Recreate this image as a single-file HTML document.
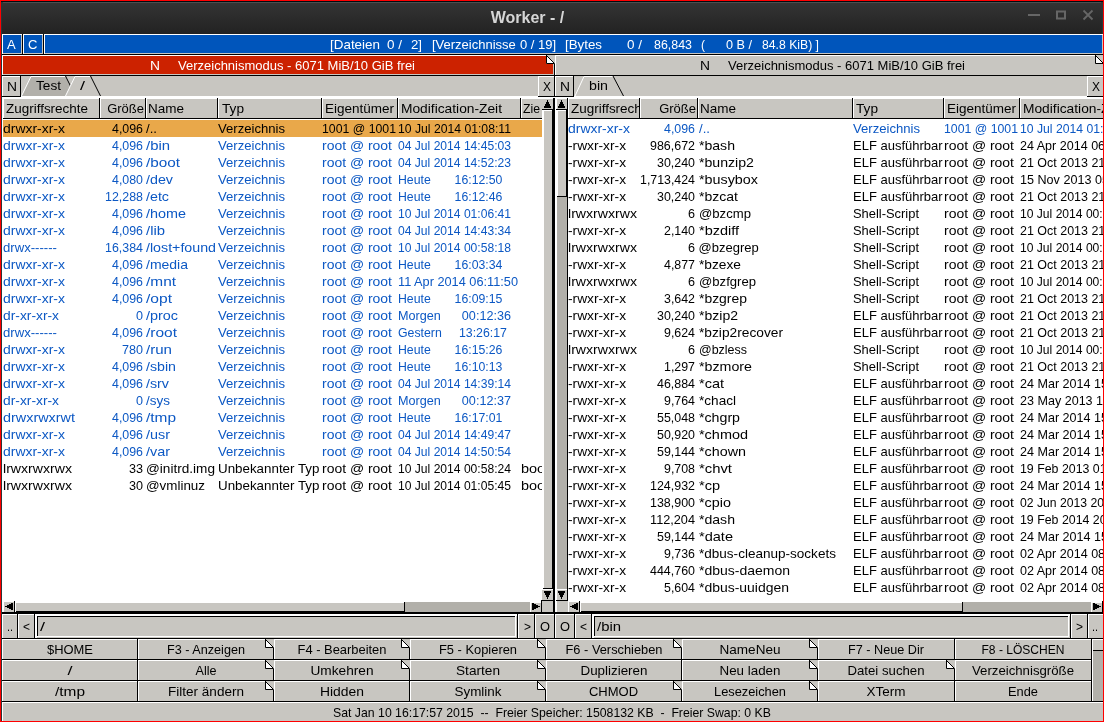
<!DOCTYPE html><html><head><meta charset="utf-8"><style>
html,body{margin:0;padding:0;width:1104px;height:722px;overflow:hidden;background:#000}
.t{position:absolute;white-space:pre;font:13px/16px "Liberation Sans",sans-serif;transform-origin:0 0}
</style></head><body><div style="position:absolute;left:0;top:0;width:1104px;height:722px;overflow:hidden;will-change:transform">
<div style="position:absolute;left:0px;top:0px;width:1104px;height:722px;background:#000;"></div>
<div style="position:absolute;left:1px;top:1px;width:1102px;height:33px;background:linear-gradient(#353535,#222222);"></div>
<div style="position:absolute;left:1px;top:1px;width:1102px;height:1px;background:#020a10;"></div>
<div style="position:absolute;left:3px;top:2px;width:1098px;height:1px;background:#4e4e4e;"></div>
<div style="position:absolute;left:1px;top:2px;width:1px;height:720px;background:#2a3638;"></div>
<div style="position:absolute;left:1102px;top:2px;width:1px;height:32px;background:#2a3638;"></div>
<div class="t" style="top:10px;color:#d6d6d6;font-size:16px;font-weight:bold;left:27.5px;width:1000px;text-align:center;transform-origin:50% 0;">Worker - /</div>
<div style="position:absolute;left:1028px;top:14px;width:12px;height:2px;background:#666;"></div>
<svg style="position:absolute;left:1056px;top:10px" width="11" height="10" viewBox="0 0 11 10"><rect x="1" y="1.5" width="8" height="7" fill="none" stroke="#666" stroke-width="2"/></svg>
<svg style="position:absolute;left:1082px;top:9px" width="12" height="12" viewBox="0 0 12 12"><path d="M1.5 1.5L10.5 10.5M10.5 1.5L1.5 10.5" stroke="#666" stroke-width="1.8"/></svg>
<div style="position:absolute;left:2px;top:34px;width:20px;height:20px;background:#fff;"></div>
<div style="position:absolute;left:3px;top:35px;width:19px;height:19px;background:#0055bb;"></div>
<div style="position:absolute;left:21px;top:35px;width:1px;height:19px;background:#c8c6c1;"></div>
<div style="position:absolute;left:3px;top:53px;width:19px;height:1px;background:#c8c6c1;"></div>
<div style="position:absolute;left:23px;top:34px;width:20px;height:20px;background:#fff;"></div>
<div style="position:absolute;left:24px;top:35px;width:19px;height:19px;background:#0055bb;"></div>
<div style="position:absolute;left:42px;top:35px;width:1px;height:19px;background:#c8c6c1;"></div>
<div style="position:absolute;left:24px;top:53px;width:19px;height:1px;background:#c8c6c1;"></div>
<div style="position:absolute;left:44px;top:34px;width:1059px;height:20px;background:#fff;"></div>
<div style="position:absolute;left:45px;top:35px;width:1058px;height:19px;background:#0055bb;"></div>
<div style="position:absolute;left:1102px;top:35px;width:1px;height:19px;background:#c8c6c1;"></div>
<div style="position:absolute;left:45px;top:53px;width:1058px;height:1px;background:#c8c6c1;"></div>
<div class="t" style="top:37px;color:#fff;left:7px;">A</div>
<div class="t" style="top:37px;color:#fff;left:28px;">C</div>
<div class="t" style="top:37px;color:#fff;transform:scaleX(1.0323);left:330px;">[Dateien</div>
<div class="t" style="top:37px;color:#fff;transform:scaleX(1.0378);left:387px;">0 /</div>
<div class="t" style="top:37px;color:#fff;transform:scaleX(1.0144);left:411px;">2]</div>
<div class="t" style="top:37px;color:#fff;left:432px;">[Verzeichnisse</div>
<div class="t" style="top:37px;color:#fff;left:520px;">0 / 19]</div>
<div class="t" style="top:37px;color:#fff;transform:scaleX(1.0242);left:565px;">[Bytes</div>
<div class="t" style="top:37px;color:#fff;transform:scaleX(1.0378);left:627px;">0 /</div>
<div class="t" style="top:37px;color:#fff;transform:scaleX(0.9552);left:654px;">86,843</div>
<div class="t" style="top:37px;color:#fff;transform:scaleX(0.9242);left:701px;">(</div>
<div class="t" style="top:37px;color:#fff;transform:scaleX(0.9725);left:726px;">0 B /</div>
<div class="t" style="top:37px;color:#fff;transform:scaleX(0.9390);left:762px;">84.8 KiB) ]</div>
<div style="position:absolute;left:2px;top:55px;width:552px;height:20px;background:#fff;"></div>
<div style="position:absolute;left:3px;top:56px;width:551px;height:19px;background:#cc2200;"></div>
<div style="position:absolute;left:553px;top:56px;width:1px;height:19px;background:#c8c6c1;"></div>
<div style="position:absolute;left:3px;top:74px;width:551px;height:1px;background:#c8c6c1;"></div>
<svg style="position:absolute;left:546px;top:55px" width="9" height="9" viewBox="0 0 9 9"><rect x="0" y="0" width="9" height="9" fill="#c8c6c1"/><path d="M0.5 0.5 L0.5 8.5 L8.5 8.5 Z" fill="#fff"/><path d="M0.5 0 L0.5 8.5 L8.5 8.5 M0.5 0.5 L8.5 8.5" stroke="#000" stroke-width="1" fill="none"/></svg>
<div style="position:absolute;left:555px;top:55px;width:548px;height:20px;background:#fff;"></div>
<div style="position:absolute;left:556px;top:56px;width:547px;height:19px;background:#c8c6c1;"></div>
<div style="position:absolute;left:1102px;top:56px;width:1px;height:19px;background:#c8c6c1;"></div>
<div style="position:absolute;left:556px;top:74px;width:547px;height:1px;background:#c8c6c1;"></div>
<svg style="position:absolute;left:1095px;top:55px" width="9" height="9" viewBox="0 0 9 9"><rect x="0" y="0" width="9" height="9" fill="#c8c6c1"/><path d="M0.5 0.5 L0.5 8.5 L8.5 8.5 Z" fill="#fff"/><path d="M0.5 0 L0.5 8.5 L8.5 8.5 M0.5 0.5 L8.5 8.5" stroke="#000" stroke-width="1" fill="none"/></svg>
<div class="t" style="top:58px;color:#fff;transform:scaleX(1.0649);left:150px;">N</div>
<div class="t" style="top:58px;color:#fff;left:178px;">Verzeichnismodus - 6071 MiB/10 GiB frei</div>
<div class="t" style="top:58px;color:#000;transform:scaleX(1.0649);left:700px;">N</div>
<div class="t" style="top:58px;color:#000;left:728px;">Verzeichnismodus - 6071 MiB/10 GiB frei</div>
<div style="position:absolute;left:2px;top:76px;width:552px;height:20px;background:#c8c6c1;"></div>
<div style="position:absolute;left:555px;top:76px;width:548px;height:20px;background:#c8c6c1;"></div>
<div style="position:absolute;left:2px;top:96px;width:1101px;height:3px;background:#fff;"></div>
<div style="position:absolute;left:2px;top:76px;width:18px;height:20px;background:#fff;"></div>
<div style="position:absolute;left:3px;top:77px;width:17px;height:19px;background:#c8c6c1;"></div>
<div style="position:absolute;left:2px;top:96px;width:19px;height:1px;background:#000;"></div>
<div style="position:absolute;left:20px;top:76px;width:1px;height:21px;background:#000;"></div>
<div class="t" style="top:79px;color:#000;transform:scaleX(1.0649);left:6.5px;">N</div>
<div style="position:absolute;left:538px;top:76px;width:16px;height:20px;background:#fff;"></div>
<div style="position:absolute;left:539px;top:77px;width:15px;height:19px;background:#c8c6c1;"></div>
<div style="position:absolute;left:538px;top:96px;width:36px;height:1px;background:#000;"></div>
<div class="t" style="top:79px;color:#000;transform:scaleX(0.9225);left:542.5px;">X</div>
<div style="position:absolute;left:555px;top:76px;width:18px;height:20px;background:#fff;"></div>
<div style="position:absolute;left:556px;top:77px;width:17px;height:19px;background:#c8c6c1;"></div>
<div style="position:absolute;left:573px;top:76px;width:1px;height:21px;background:#000;"></div>
<div class="t" style="top:79px;color:#000;transform:scaleX(1.0649);left:560px;">N</div>
<div style="position:absolute;left:1087px;top:76px;width:16px;height:20px;background:#fff;"></div>
<div style="position:absolute;left:1088px;top:77px;width:15px;height:19px;background:#c8c6c1;"></div>
<div style="position:absolute;left:1087px;top:96px;width:16px;height:1px;background:#000;"></div>
<div class="t" style="top:79px;color:#000;transform:scaleX(0.9225);left:1091.5px;">X</div>
<svg style="position:absolute;left:21px;top:76px" width="100" height="21" viewBox="0 0 100 21"><path d="M21.5 96 L31 76.5 L65.5 76.5 L75.5 96 Z" transform="translate(-21,-76)" fill="#b2b0aa"/><path d="M21.5 96 L31 76.5 L65.5 76.5" transform="translate(-21,-76)" stroke="#fff" fill="none"/><path d="M65.5 76 L75.5 96" transform="translate(-21,-76)" stroke="#000" fill="none"/><path d="M65.5 96 L75 76.5 L90.5 76.5 L100.5 96 Z" transform="translate(-21,-76)" fill="#c8c6c1"/><path d="M65.5 96 L75 76.5 L90.5 76.5" transform="translate(-21,-76)" stroke="#fff" fill="none"/><path d="M90.5 76 L100.5 96" transform="translate(-21,-76)" stroke="#000" fill="none"/></svg>
<div class="t" style="top:78px;color:#000;transform:scaleX(1.0485);left:36px;">Test</div>
<div class="t" style="top:78px;color:#000;transform:scaleX(1.3853);left:80px;">/</div>
<svg style="position:absolute;left:573px;top:76px" width="60" height="21" viewBox="0 0 60 21"><path d="M575 96 L584 76.5 L613 76.5 L623.5 96 Z" transform="translate(-573,-76)" fill="#c8c6c1"/><path d="M575 96 L584 76.5 L613 76.5" transform="translate(-573,-76)" stroke="#fff" fill="none"/><path d="M613 76 L623.5 96" transform="translate(-573,-76)" stroke="#000" fill="none"/></svg>
<div class="t" style="top:78px;color:#000;transform:scaleX(1.0945);left:589px;">bin</div>
<div style="position:absolute;left:2px;top:97px;width:540px;height:1px;background:#fff;"></div>
<div style="position:absolute;left:2px;top:98px;width:2px;height:21px;background:#fff;"></div>
<div style="position:absolute;left:4px;top:99px;width:95px;height:19px;background:#c8c6c1;"></div>
<div style="position:absolute;left:99px;top:98px;width:1px;height:20px;background:#000;"></div>
<div style="position:absolute;left:100px;top:98px;width:1px;height:20px;background:#fff;"></div>
<div style="position:absolute;left:4px;top:98px;width:95px;height:20px;overflow:hidden;">
<div class="t" style="top:3px;color:#000;transform:scaleX(1.0347);left:2px;">Zugriffsrechte</div>
</div>
<div style="position:absolute;left:101px;top:99px;width:44px;height:19px;background:#c8c6c1;"></div>
<div style="position:absolute;left:145px;top:98px;width:1px;height:20px;background:#000;"></div>
<div style="position:absolute;left:146px;top:98px;width:1px;height:20px;background:#fff;"></div>
<div style="position:absolute;left:101px;top:98px;width:44px;height:20px;overflow:hidden;">
<div class="t" style="top:3px;color:#000;left:-957px;width:1000px;text-align:right;transform-origin:100% 0;">Größe</div>
</div>
<div style="position:absolute;left:147px;top:99px;width:70px;height:19px;background:#c8c6c1;"></div>
<div style="position:absolute;left:217px;top:98px;width:1px;height:20px;background:#000;"></div>
<div style="position:absolute;left:218px;top:98px;width:1px;height:20px;background:#fff;"></div>
<div style="position:absolute;left:147px;top:98px;width:70px;height:20px;overflow:hidden;">
<div class="t" style="top:3px;color:#000;transform:scaleX(1.0378);left:1px;">Name</div>
</div>
<div style="position:absolute;left:219px;top:99px;width:102px;height:19px;background:#c8c6c1;"></div>
<div style="position:absolute;left:321px;top:98px;width:1px;height:20px;background:#000;"></div>
<div style="position:absolute;left:322px;top:98px;width:1px;height:20px;background:#fff;"></div>
<div style="position:absolute;left:219px;top:98px;width:102px;height:20px;overflow:hidden;">
<div class="t" style="top:3px;color:#000;transform:scaleX(1.0500);left:2.5px;">Typ</div>
</div>
<div style="position:absolute;left:323px;top:99px;width:74px;height:19px;background:#c8c6c1;"></div>
<div style="position:absolute;left:397px;top:98px;width:1px;height:20px;background:#000;"></div>
<div style="position:absolute;left:398px;top:98px;width:1px;height:20px;background:#fff;"></div>
<div style="position:absolute;left:323px;top:98px;width:74px;height:20px;overflow:hidden;">
<div class="t" style="top:3px;color:#000;transform:scaleX(1.0376);left:1.5px;">Eigentümer</div>
</div>
<div style="position:absolute;left:399px;top:99px;width:121px;height:19px;background:#c8c6c1;"></div>
<div style="position:absolute;left:520px;top:98px;width:1px;height:20px;background:#000;"></div>
<div style="position:absolute;left:521px;top:98px;width:1px;height:20px;background:#fff;"></div>
<div style="position:absolute;left:399px;top:98px;width:121px;height:20px;overflow:hidden;">
<div class="t" style="top:3px;color:#000;transform:scaleX(1.0588);left:1.5px;">Modification-Zeit</div>
</div>
<div style="position:absolute;left:522px;top:99px;width:20px;height:19px;background:#c8c6c1;"></div>
<div style="position:absolute;left:542px;top:98px;width:1px;height:20px;background:#000;"></div>
<div style="position:absolute;left:543px;top:98px;width:1px;height:20px;background:#fff;"></div>
<div style="position:absolute;left:522px;top:98px;width:20px;height:20px;overflow:hidden;">
<div class="t" style="top:3px;color:#000;transform:scaleX(0.9412);left:1px;">Zie</div>
</div>
<div style="position:absolute;left:3px;top:118px;width:539px;height:1px;background:#000;"></div>
<div style="position:absolute;left:2px;top:119px;width:540px;height:482px;overflow:hidden;background:#fff;">
<div style="position:absolute;left:1px;top:1px;width:539px;height:17px;background:#e9a84a;"></div>
<div class="t" style="top:2px;color:#000;transform:scaleX(1.0733);left:1px;">drwxr-xr-x</div>
<div class="t" style="top:2px;color:#000;transform:scaleX(0.9525);left:-859px;width:1000px;text-align:right;transform-origin:100% 0;">4,096</div>
<div class="t" style="top:2px;color:#000;transform:scaleX(1.0159);left:144px;">/..</div>
<div class="t" style="top:2px;color:#000;transform:scaleX(1.0075);left:216px;">Verzeichnis</div>
<div class="t" style="top:2px;color:#000;transform:scaleX(0.9451);left:319.5px;">1001 @ 1001</div>
<div class="t" style="top:2px;color:#000;transform:scaleX(0.9376);left:396px;">10 Jul 2014 01:08:11</div>
<div class="t" style="top:19px;color:#0c58c4;transform:scaleX(1.0733);left:1px;">drwxr-xr-x</div>
<div class="t" style="top:19px;color:#0c58c4;transform:scaleX(0.9525);left:-859px;width:1000px;text-align:right;transform-origin:100% 0;">4,096</div>
<div class="t" style="top:19px;color:#0c58c4;transform:scaleX(1.1446);left:144px;">/bin</div>
<div class="t" style="top:19px;color:#0c58c4;transform:scaleX(1.0075);left:216px;">Verzeichnis</div>
<div class="t" style="top:19px;color:#0c58c4;transform:scaleX(1.0731);left:319.5px;">root @ root</div>
<div class="t" style="top:19px;color:#0c58c4;transform:scaleX(0.9302);left:396px;">04 Jul 2014 14:45:03</div>
<div class="t" style="top:36px;color:#0c58c4;transform:scaleX(1.0733);left:1px;">drwxr-xr-x</div>
<div class="t" style="top:36px;color:#0c58c4;transform:scaleX(0.9525);left:-859px;width:1000px;text-align:right;transform-origin:100% 0;">4,096</div>
<div class="t" style="top:36px;color:#0c58c4;transform:scaleX(1.1756);left:144px;">/boot</div>
<div class="t" style="top:36px;color:#0c58c4;transform:scaleX(1.0075);left:216px;">Verzeichnis</div>
<div class="t" style="top:36px;color:#0c58c4;transform:scaleX(1.0731);left:319.5px;">root @ root</div>
<div class="t" style="top:36px;color:#0c58c4;transform:scaleX(0.9302);left:396px;">04 Jul 2014 14:52:23</div>
<div class="t" style="top:53px;color:#0c58c4;transform:scaleX(1.0733);left:1px;">drwxr-xr-x</div>
<div class="t" style="top:53px;color:#0c58c4;transform:scaleX(0.9525);left:-859px;width:1000px;text-align:right;transform-origin:100% 0;">4,080</div>
<div class="t" style="top:53px;color:#0c58c4;transform:scaleX(1.0985);left:144px;">/dev</div>
<div class="t" style="top:53px;color:#0c58c4;transform:scaleX(1.0075);left:216px;">Verzeichnis</div>
<div class="t" style="top:53px;color:#0c58c4;transform:scaleX(1.0731);left:319.5px;">root @ root</div>
<div class="t" style="top:53px;color:#0c58c4;transform:scaleX(0.9441);left:396px;">Heute       16:12:50</div>
<div class="t" style="top:70px;color:#0c58c4;transform:scaleX(1.0733);left:1px;">drwxr-xr-x</div>
<div class="t" style="top:70px;color:#0c58c4;transform:scaleX(0.9552);left:-859px;width:1000px;text-align:right;transform-origin:100% 0;">12,288</div>
<div class="t" style="top:70px;color:#0c58c4;transform:scaleX(1.0977);left:144px;">/etc</div>
<div class="t" style="top:70px;color:#0c58c4;transform:scaleX(1.0075);left:216px;">Verzeichnis</div>
<div class="t" style="top:70px;color:#0c58c4;transform:scaleX(1.0731);left:319.5px;">root @ root</div>
<div class="t" style="top:70px;color:#0c58c4;transform:scaleX(0.9441);left:396px;">Heute       16:12:46</div>
<div class="t" style="top:87px;color:#0c58c4;transform:scaleX(1.0733);left:1px;">drwxr-xr-x</div>
<div class="t" style="top:87px;color:#0c58c4;transform:scaleX(0.9525);left:-859px;width:1000px;text-align:right;transform-origin:100% 0;">4,096</div>
<div class="t" style="top:87px;color:#0c58c4;transform:scaleX(1.1068);left:144px;">/home</div>
<div class="t" style="top:87px;color:#0c58c4;transform:scaleX(1.0075);left:216px;">Verzeichnis</div>
<div class="t" style="top:87px;color:#0c58c4;transform:scaleX(1.0731);left:319.5px;">root @ root</div>
<div class="t" style="top:87px;color:#0c58c4;transform:scaleX(0.9302);left:396px;">10 Jul 2014 01:06:41</div>
<div class="t" style="top:104px;color:#0c58c4;transform:scaleX(1.0733);left:1px;">drwxr-xr-x</div>
<div class="t" style="top:104px;color:#0c58c4;transform:scaleX(0.9525);left:-859px;width:1000px;text-align:right;transform-origin:100% 0;">4,096</div>
<div class="t" style="top:104px;color:#0c58c4;transform:scaleX(1.1429);left:144px;">/lib</div>
<div class="t" style="top:104px;color:#0c58c4;transform:scaleX(1.0075);left:216px;">Verzeichnis</div>
<div class="t" style="top:104px;color:#0c58c4;transform:scaleX(1.0731);left:319.5px;">root @ root</div>
<div class="t" style="top:104px;color:#0c58c4;transform:scaleX(0.9302);left:396px;">04 Jul 2014 14:43:34</div>
<div class="t" style="top:121px;color:#0c58c4;transform:scaleX(1.0108);left:1px;">drwx------</div>
<div class="t" style="top:121px;color:#0c58c4;transform:scaleX(0.9552);left:-859px;width:1000px;text-align:right;transform-origin:100% 0;">16,384</div>
<div class="t" style="top:121px;color:#0c58c4;transform:scaleX(1.0940);left:144px;">/lost+found</div>
<div class="t" style="top:121px;color:#0c58c4;transform:scaleX(1.0075);left:216px;">Verzeichnis</div>
<div class="t" style="top:121px;color:#0c58c4;transform:scaleX(1.0731);left:319.5px;">root @ root</div>
<div class="t" style="top:121px;color:#0c58c4;transform:scaleX(0.9302);left:396px;">10 Jul 2014 00:58:18</div>
<div class="t" style="top:138px;color:#0c58c4;transform:scaleX(1.0733);left:1px;">drwxr-xr-x</div>
<div class="t" style="top:138px;color:#0c58c4;transform:scaleX(0.9525);left:-859px;width:1000px;text-align:right;transform-origin:100% 0;">4,096</div>
<div class="t" style="top:138px;color:#0c58c4;transform:scaleX(1.0761);left:144px;">/media</div>
<div class="t" style="top:138px;color:#0c58c4;transform:scaleX(1.0075);left:216px;">Verzeichnis</div>
<div class="t" style="top:138px;color:#0c58c4;transform:scaleX(1.0731);left:319.5px;">root @ root</div>
<div class="t" style="top:138px;color:#0c58c4;transform:scaleX(0.9441);left:396px;">Heute       16:03:34</div>
<div class="t" style="top:155px;color:#0c58c4;transform:scaleX(1.0733);left:1px;">drwxr-xr-x</div>
<div class="t" style="top:155px;color:#0c58c4;transform:scaleX(0.9525);left:-859px;width:1000px;text-align:right;transform-origin:100% 0;">4,096</div>
<div class="t" style="top:155px;color:#0c58c4;transform:scaleX(1.1867);left:144px;">/mnt</div>
<div class="t" style="top:155px;color:#0c58c4;transform:scaleX(1.0075);left:216px;">Verzeichnis</div>
<div class="t" style="top:155px;color:#0c58c4;transform:scaleX(1.0731);left:319.5px;">root @ root</div>
<div class="t" style="top:155px;color:#0c58c4;transform:scaleX(0.9801);left:396px;">11 Apr 2014 06:11:50</div>
<div class="t" style="top:172px;color:#0c58c4;transform:scaleX(1.0733);left:1px;">drwxr-xr-x</div>
<div class="t" style="top:172px;color:#0c58c4;transform:scaleX(0.9525);left:-859px;width:1000px;text-align:right;transform-origin:100% 0;">4,096</div>
<div class="t" style="top:172px;color:#0c58c4;transform:scaleX(1.1988);left:144px;">/opt</div>
<div class="t" style="top:172px;color:#0c58c4;transform:scaleX(1.0075);left:216px;">Verzeichnis</div>
<div class="t" style="top:172px;color:#0c58c4;transform:scaleX(1.0731);left:319.5px;">root @ root</div>
<div class="t" style="top:172px;color:#0c58c4;transform:scaleX(0.9441);left:396px;">Heute       16:09:15</div>
<div class="t" style="top:189px;color:#0c58c4;transform:scaleX(1.0626);left:1px;">dr-xr-xr-x</div>
<div class="t" style="top:189px;color:#0c58c4;transform:scaleX(0.9676);left:-859px;width:1000px;text-align:right;transform-origin:100% 0;">0</div>
<div class="t" style="top:189px;color:#0c58c4;transform:scaleX(1.1070);left:144px;">/proc</div>
<div class="t" style="top:189px;color:#0c58c4;transform:scaleX(1.0075);left:216px;">Verzeichnis</div>
<div class="t" style="top:189px;color:#0c58c4;transform:scaleX(1.0731);left:319.5px;">root @ root</div>
<div class="t" style="top:189px;color:#0c58c4;transform:scaleX(0.9710);left:396px;">Morgen      00:12:36</div>
<div class="t" style="top:206px;color:#0c58c4;transform:scaleX(1.0108);left:1px;">drwx------</div>
<div class="t" style="top:206px;color:#0c58c4;transform:scaleX(0.9525);left:-859px;width:1000px;text-align:right;transform-origin:100% 0;">4,096</div>
<div class="t" style="top:206px;color:#0c58c4;transform:scaleX(1.1916);left:144px;">/root</div>
<div class="t" style="top:206px;color:#0c58c4;transform:scaleX(1.0075);left:216px;">Verzeichnis</div>
<div class="t" style="top:206px;color:#0c58c4;transform:scaleX(1.0731);left:319.5px;">root @ root</div>
<div class="t" style="top:206px;color:#0c58c4;transform:scaleX(0.9476);left:396px;">Gestern     13:26:17</div>
<div class="t" style="top:223px;color:#0c58c4;transform:scaleX(1.0733);left:1px;">drwxr-xr-x</div>
<div class="t" style="top:223px;color:#0c58c4;transform:scaleX(0.9676);left:-859px;width:1000px;text-align:right;transform-origin:100% 0;">780</div>
<div class="t" style="top:223px;color:#0c58c4;transform:scaleX(1.1604);left:144px;">/run</div>
<div class="t" style="top:223px;color:#0c58c4;transform:scaleX(1.0075);left:216px;">Verzeichnis</div>
<div class="t" style="top:223px;color:#0c58c4;transform:scaleX(1.0731);left:319.5px;">root @ root</div>
<div class="t" style="top:223px;color:#0c58c4;transform:scaleX(0.9441);left:396px;">Heute       16:15:26</div>
<div class="t" style="top:240px;color:#0c58c4;transform:scaleX(1.0733);left:1px;">drwxr-xr-x</div>
<div class="t" style="top:240px;color:#0c58c4;transform:scaleX(0.9525);left:-859px;width:1000px;text-align:right;transform-origin:100% 0;">4,096</div>
<div class="t" style="top:240px;color:#0c58c4;transform:scaleX(1.0922);left:144px;">/sbin</div>
<div class="t" style="top:240px;color:#0c58c4;transform:scaleX(1.0075);left:216px;">Verzeichnis</div>
<div class="t" style="top:240px;color:#0c58c4;transform:scaleX(1.0731);left:319.5px;">root @ root</div>
<div class="t" style="top:240px;color:#0c58c4;transform:scaleX(0.9441);left:396px;">Heute       16:10:13</div>
<div class="t" style="top:257px;color:#0c58c4;transform:scaleX(1.0733);left:1px;">drwxr-xr-x</div>
<div class="t" style="top:257px;color:#0c58c4;transform:scaleX(0.9525);left:-859px;width:1000px;text-align:right;transform-origin:100% 0;">4,096</div>
<div class="t" style="top:257px;color:#0c58c4;transform:scaleX(1.0985);left:144px;">/srv</div>
<div class="t" style="top:257px;color:#0c58c4;transform:scaleX(1.0075);left:216px;">Verzeichnis</div>
<div class="t" style="top:257px;color:#0c58c4;transform:scaleX(1.0731);left:319.5px;">root @ root</div>
<div class="t" style="top:257px;color:#0c58c4;transform:scaleX(0.9302);left:396px;">04 Jul 2014 14:39:14</div>
<div class="t" style="top:274px;color:#0c58c4;transform:scaleX(1.0626);left:1px;">dr-xr-xr-x</div>
<div class="t" style="top:274px;color:#0c58c4;transform:scaleX(0.9676);left:-859px;width:1000px;text-align:right;transform-origin:100% 0;">0</div>
<div class="t" style="top:274px;color:#0c58c4;transform:scaleX(1.0385);left:144px;">/sys</div>
<div class="t" style="top:274px;color:#0c58c4;transform:scaleX(1.0075);left:216px;">Verzeichnis</div>
<div class="t" style="top:274px;color:#0c58c4;transform:scaleX(1.0731);left:319.5px;">root @ root</div>
<div class="t" style="top:274px;color:#0c58c4;transform:scaleX(0.9710);left:396px;">Morgen      00:12:37</div>
<div class="t" style="top:291px;color:#0c58c4;transform:scaleX(1.1077);left:1px;">drwxrwxrwt</div>
<div class="t" style="top:291px;color:#0c58c4;transform:scaleX(0.9525);left:-859px;width:1000px;text-align:right;transform-origin:100% 0;">4,096</div>
<div class="t" style="top:291px;color:#0c58c4;transform:scaleX(1.1867);left:144px;">/tmp</div>
<div class="t" style="top:291px;color:#0c58c4;transform:scaleX(1.0075);left:216px;">Verzeichnis</div>
<div class="t" style="top:291px;color:#0c58c4;transform:scaleX(1.0731);left:319.5px;">root @ root</div>
<div class="t" style="top:291px;color:#0c58c4;transform:scaleX(0.9441);left:396px;">Heute       16:17:01</div>
<div class="t" style="top:308px;color:#0c58c4;transform:scaleX(1.0733);left:1px;">drwxr-xr-x</div>
<div class="t" style="top:308px;color:#0c58c4;transform:scaleX(0.9525);left:-859px;width:1000px;text-align:right;transform-origin:100% 0;">4,096</div>
<div class="t" style="top:308px;color:#0c58c4;transform:scaleX(1.1074);left:144px;">/usr</div>
<div class="t" style="top:308px;color:#0c58c4;transform:scaleX(1.0075);left:216px;">Verzeichnis</div>
<div class="t" style="top:308px;color:#0c58c4;transform:scaleX(1.0731);left:319.5px;">root @ root</div>
<div class="t" style="top:308px;color:#0c58c4;transform:scaleX(0.9302);left:396px;">04 Jul 2014 14:49:47</div>
<div class="t" style="top:325px;color:#0c58c4;transform:scaleX(1.0733);left:1px;">drwxr-xr-x</div>
<div class="t" style="top:325px;color:#0c58c4;transform:scaleX(0.9525);left:-859px;width:1000px;text-align:right;transform-origin:100% 0;">4,096</div>
<div class="t" style="top:325px;color:#0c58c4;transform:scaleX(1.1074);left:144px;">/var</div>
<div class="t" style="top:325px;color:#0c58c4;transform:scaleX(1.0075);left:216px;">Verzeichnis</div>
<div class="t" style="top:325px;color:#0c58c4;transform:scaleX(1.0731);left:319.5px;">root @ root</div>
<div class="t" style="top:325px;color:#0c58c4;transform:scaleX(0.9302);left:396px;">04 Jul 2014 14:50:54</div>
<div class="t" style="top:342px;color:#000;transform:scaleX(1.0858);left:1px;">lrwxrwxrwx</div>
<div class="t" style="top:342px;color:#000;transform:scaleX(0.9676);left:-859px;width:1000px;text-align:right;transform-origin:100% 0;">33</div>
<div class="t" style="top:342px;color:#000;transform:scaleX(1.0462);left:144px;">@initrd.img</div>
<div class="t" style="top:342px;color:#000;transform:scaleX(1.0274);left:216px;">Unbekannter Typ</div>
<div class="t" style="top:342px;color:#000;transform:scaleX(1.0731);left:319.5px;">root @ root</div>
<div class="t" style="top:342px;color:#000;transform:scaleX(0.9302);left:396px;">10 Jul 2014 00:58:24</div>
<div class="t" style="top:342px;color:#000;transform:scaleX(1.1142);left:519px;">boot/initrd.img</div>
<div class="t" style="top:359px;color:#000;transform:scaleX(1.0858);left:1px;">lrwxrwxrwx</div>
<div class="t" style="top:359px;color:#000;transform:scaleX(0.9676);left:-859px;width:1000px;text-align:right;transform-origin:100% 0;">30</div>
<div class="t" style="top:359px;color:#000;transform:scaleX(1.0300);left:144px;">@vmlinuz</div>
<div class="t" style="top:359px;color:#000;transform:scaleX(1.0274);left:216px;">Unbekannter Typ</div>
<div class="t" style="top:359px;color:#000;transform:scaleX(1.0731);left:319.5px;">root @ root</div>
<div class="t" style="top:359px;color:#000;transform:scaleX(0.9302);left:396px;">10 Jul 2014 01:05:45</div>
<div class="t" style="top:359px;color:#000;transform:scaleX(1.1096);left:519px;">boot/vmlinuz</div>
</div>
<div style="position:absolute;left:568px;top:97px;width:535px;height:1px;background:#fff;"></div>
<div style="position:absolute;left:568px;top:98px;width:1px;height:21px;background:#fff;"></div>
<div style="position:absolute;left:569px;top:99px;width:70px;height:19px;background:#c8c6c1;"></div>
<div style="position:absolute;left:639px;top:98px;width:1px;height:20px;background:#000;"></div>
<div style="position:absolute;left:640px;top:98px;width:1px;height:20px;background:#fff;"></div>
<div style="position:absolute;left:569px;top:98px;width:70px;height:20px;overflow:hidden;">
<div class="t" style="top:3px;color:#000;transform:scaleX(1.0347);left:1.5px;">Zugriffsrechte</div>
</div>
<div style="position:absolute;left:641px;top:99px;width:56px;height:19px;background:#c8c6c1;"></div>
<div style="position:absolute;left:697px;top:98px;width:1px;height:20px;background:#000;"></div>
<div style="position:absolute;left:698px;top:98px;width:1px;height:20px;background:#fff;"></div>
<div style="position:absolute;left:641px;top:98px;width:56px;height:20px;overflow:hidden;">
<div class="t" style="top:3px;color:#000;left:-945px;width:1000px;text-align:right;transform-origin:100% 0;">Größe</div>
</div>
<div style="position:absolute;left:699px;top:99px;width:153px;height:19px;background:#c8c6c1;"></div>
<div style="position:absolute;left:852px;top:98px;width:1px;height:20px;background:#000;"></div>
<div style="position:absolute;left:853px;top:98px;width:1px;height:20px;background:#fff;"></div>
<div style="position:absolute;left:699px;top:98px;width:153px;height:20px;overflow:hidden;">
<div class="t" style="top:3px;color:#000;transform:scaleX(1.0378);left:1px;">Name</div>
</div>
<div style="position:absolute;left:854px;top:99px;width:89px;height:19px;background:#c8c6c1;"></div>
<div style="position:absolute;left:943px;top:98px;width:1px;height:20px;background:#000;"></div>
<div style="position:absolute;left:944px;top:98px;width:1px;height:20px;background:#fff;"></div>
<div style="position:absolute;left:854px;top:98px;width:89px;height:20px;overflow:hidden;">
<div class="t" style="top:3px;color:#000;transform:scaleX(1.0500);left:2px;">Typ</div>
</div>
<div style="position:absolute;left:945px;top:99px;width:74px;height:19px;background:#c8c6c1;"></div>
<div style="position:absolute;left:1019px;top:98px;width:1px;height:20px;background:#000;"></div>
<div style="position:absolute;left:1020px;top:98px;width:1px;height:20px;background:#fff;"></div>
<div style="position:absolute;left:945px;top:98px;width:74px;height:20px;overflow:hidden;">
<div class="t" style="top:3px;color:#000;transform:scaleX(1.0376);left:2px;">Eigentümer</div>
</div>
<div style="position:absolute;left:1021px;top:99px;width:82px;height:19px;background:#c8c6c1;"></div>
<div style="position:absolute;left:1103px;top:98px;width:1px;height:20px;background:#000;"></div>
<div style="position:absolute;left:1104px;top:98px;width:1px;height:20px;background:#fff;"></div>
<div style="position:absolute;left:1021px;top:98px;width:82px;height:20px;overflow:hidden;">
<div class="t" style="top:3px;color:#000;transform:scaleX(1.0588);left:1.5px;">Modification-Zeit</div>
</div>
<div style="position:absolute;left:568px;top:118px;width:535px;height:1px;background:#000;"></div>
<div style="position:absolute;left:568px;top:119px;width:535px;height:482px;overflow:hidden;background:#fff;">
<div class="t" style="top:2px;color:#0c58c4;transform:scaleX(1.0733);left:0px;">drwxr-xr-x</div>
<div class="t" style="top:2px;color:#0c58c4;transform:scaleX(0.9525);left:-873px;width:1000px;text-align:right;transform-origin:100% 0;">4,096</div>
<div class="t" style="top:2px;color:#0c58c4;transform:scaleX(1.0159);left:130.5px;">/..</div>
<div class="t" style="top:2px;color:#0c58c4;transform:scaleX(1.0075);left:285px;">Verzeichnis</div>
<div class="t" style="top:2px;color:#0c58c4;transform:scaleX(0.9451);left:376px;">1001 @ 1001</div>
<div class="t" style="top:2px;color:#0c58c4;transform:scaleX(0.9376);left:452px;">10 Jul 2014 01:08:11</div>
<div class="t" style="top:19px;color:#000;transform:scaleX(1.0572);left:0px;">-rwxr-xr-x</div>
<div class="t" style="top:19px;color:#000;transform:scaleX(0.9571);left:-873px;width:1000px;text-align:right;transform-origin:100% 0;">986,672</div>
<div class="t" style="top:19px;color:#000;transform:scaleX(1.0822);left:130.5px;">*bash</div>
<div class="t" style="top:19px;color:#000;left:285px;">ELF ausführbar</div>
<div class="t" style="top:19px;color:#000;transform:scaleX(1.0731);left:376px;">root @ root</div>
<div class="t" style="top:19px;color:#000;transform:scaleX(0.9648);left:452px;">24 Apr 2014 06:35:12</div>
<div class="t" style="top:36px;color:#000;transform:scaleX(1.0572);left:0px;">-rwxr-xr-x</div>
<div class="t" style="top:36px;color:#000;transform:scaleX(0.9552);left:-873px;width:1000px;text-align:right;transform-origin:100% 0;">30,240</div>
<div class="t" style="top:36px;color:#000;transform:scaleX(1.0864);left:130.5px;">*bunzip2</div>
<div class="t" style="top:36px;color:#000;left:285px;">ELF ausführbar</div>
<div class="t" style="top:36px;color:#000;transform:scaleX(1.0731);left:376px;">root @ root</div>
<div class="t" style="top:36px;color:#000;transform:scaleX(0.9594);left:452px;">21 Oct 2013 21:22:40</div>
<div class="t" style="top:53px;color:#000;transform:scaleX(1.0572);left:0px;">-rwxr-xr-x</div>
<div class="t" style="top:53px;color:#000;transform:scaleX(0.9506);left:-873px;width:1000px;text-align:right;transform-origin:100% 0;">1,713,424</div>
<div class="t" style="top:53px;color:#000;transform:scaleX(1.1028);left:130.5px;">*busybox</div>
<div class="t" style="top:53px;color:#000;left:285px;">ELF ausführbar</div>
<div class="t" style="top:53px;color:#000;transform:scaleX(1.0731);left:376px;">root @ root</div>
<div class="t" style="top:53px;color:#000;transform:scaleX(0.9689);left:452px;">15 Nov 2013 05:40:37</div>
<div class="t" style="top:70px;color:#000;transform:scaleX(1.0572);left:0px;">-rwxr-xr-x</div>
<div class="t" style="top:70px;color:#000;transform:scaleX(0.9552);left:-873px;width:1000px;text-align:right;transform-origin:100% 0;">30,240</div>
<div class="t" style="top:70px;color:#000;transform:scaleX(1.0791);left:130.5px;">*bzcat</div>
<div class="t" style="top:70px;color:#000;left:285px;">ELF ausführbar</div>
<div class="t" style="top:70px;color:#000;transform:scaleX(1.0731);left:376px;">root @ root</div>
<div class="t" style="top:70px;color:#000;transform:scaleX(0.9594);left:452px;">21 Oct 2013 21:22:40</div>
<div class="t" style="top:87px;color:#000;transform:scaleX(1.0858);left:0px;">lrwxrwxrwx</div>
<div class="t" style="top:87px;color:#000;transform:scaleX(0.9676);left:-873px;width:1000px;text-align:right;transform-origin:100% 0;">6</div>
<div class="t" style="top:87px;color:#000;transform:scaleX(1.0097);left:130.5px;">@bzcmp</div>
<div class="t" style="top:87px;color:#000;transform:scaleX(0.9927);left:285px;">Shell-Script</div>
<div class="t" style="top:87px;color:#000;transform:scaleX(1.0731);left:376px;">root @ root</div>
<div class="t" style="top:87px;color:#000;transform:scaleX(0.9302);left:452px;">10 Jul 2014 00:58:29</div>
<div class="t" style="top:104px;color:#000;transform:scaleX(1.0572);left:0px;">-rwxr-xr-x</div>
<div class="t" style="top:104px;color:#000;transform:scaleX(0.9525);left:-873px;width:1000px;text-align:right;transform-origin:100% 0;">2,140</div>
<div class="t" style="top:104px;color:#000;transform:scaleX(1.1140);left:130.5px;">*bzdiff</div>
<div class="t" style="top:104px;color:#000;transform:scaleX(0.9927);left:285px;">Shell-Script</div>
<div class="t" style="top:104px;color:#000;transform:scaleX(1.0731);left:376px;">root @ root</div>
<div class="t" style="top:104px;color:#000;transform:scaleX(0.9594);left:452px;">21 Oct 2013 21:22:37</div>
<div class="t" style="top:121px;color:#000;transform:scaleX(1.0858);left:0px;">lrwxrwxrwx</div>
<div class="t" style="top:121px;color:#000;transform:scaleX(0.9676);left:-873px;width:1000px;text-align:right;transform-origin:100% 0;">6</div>
<div class="t" style="top:121px;color:#000;left:130.5px;">@bzegrep</div>
<div class="t" style="top:121px;color:#000;transform:scaleX(0.9927);left:285px;">Shell-Script</div>
<div class="t" style="top:121px;color:#000;transform:scaleX(1.0731);left:376px;">root @ root</div>
<div class="t" style="top:121px;color:#000;transform:scaleX(0.9302);left:452px;">10 Jul 2014 00:58:29</div>
<div class="t" style="top:138px;color:#000;transform:scaleX(1.0572);left:0px;">-rwxr-xr-x</div>
<div class="t" style="top:138px;color:#000;transform:scaleX(0.9525);left:-873px;width:1000px;text-align:right;transform-origin:100% 0;">4,877</div>
<div class="t" style="top:138px;color:#000;transform:scaleX(1.0562);left:130.5px;">*bzexe</div>
<div class="t" style="top:138px;color:#000;transform:scaleX(0.9927);left:285px;">Shell-Script</div>
<div class="t" style="top:138px;color:#000;transform:scaleX(1.0731);left:376px;">root @ root</div>
<div class="t" style="top:138px;color:#000;transform:scaleX(0.9594);left:452px;">21 Oct 2013 21:22:37</div>
<div class="t" style="top:155px;color:#000;transform:scaleX(1.0858);left:0px;">lrwxrwxrwx</div>
<div class="t" style="top:155px;color:#000;transform:scaleX(0.9676);left:-873px;width:1000px;text-align:right;transform-origin:100% 0;">6</div>
<div class="t" style="top:155px;color:#000;transform:scaleX(1.0075);left:130.5px;">@bzfgrep</div>
<div class="t" style="top:155px;color:#000;transform:scaleX(0.9927);left:285px;">Shell-Script</div>
<div class="t" style="top:155px;color:#000;transform:scaleX(1.0731);left:376px;">root @ root</div>
<div class="t" style="top:155px;color:#000;transform:scaleX(0.9302);left:452px;">10 Jul 2014 00:58:29</div>
<div class="t" style="top:172px;color:#000;transform:scaleX(1.0572);left:0px;">-rwxr-xr-x</div>
<div class="t" style="top:172px;color:#000;transform:scaleX(0.9525);left:-873px;width:1000px;text-align:right;transform-origin:100% 0;">3,642</div>
<div class="t" style="top:172px;color:#000;transform:scaleX(1.0708);left:130.5px;">*bzgrep</div>
<div class="t" style="top:172px;color:#000;transform:scaleX(0.9927);left:285px;">Shell-Script</div>
<div class="t" style="top:172px;color:#000;transform:scaleX(1.0731);left:376px;">root @ root</div>
<div class="t" style="top:172px;color:#000;transform:scaleX(0.9594);left:452px;">21 Oct 2013 21:22:37</div>
<div class="t" style="top:189px;color:#000;transform:scaleX(1.0572);left:0px;">-rwxr-xr-x</div>
<div class="t" style="top:189px;color:#000;transform:scaleX(0.9552);left:-873px;width:1000px;text-align:right;transform-origin:100% 0;">30,240</div>
<div class="t" style="top:189px;color:#000;transform:scaleX(1.0787);left:130.5px;">*bzip2</div>
<div class="t" style="top:189px;color:#000;left:285px;">ELF ausführbar</div>
<div class="t" style="top:189px;color:#000;transform:scaleX(1.0731);left:376px;">root @ root</div>
<div class="t" style="top:189px;color:#000;transform:scaleX(0.9594);left:452px;">21 Oct 2013 21:22:40</div>
<div class="t" style="top:206px;color:#000;transform:scaleX(1.0572);left:0px;">-rwxr-xr-x</div>
<div class="t" style="top:206px;color:#000;transform:scaleX(0.9525);left:-873px;width:1000px;text-align:right;transform-origin:100% 0;">9,624</div>
<div class="t" style="top:206px;color:#000;transform:scaleX(1.0564);left:130.5px;">*bzip2recover</div>
<div class="t" style="top:206px;color:#000;left:285px;">ELF ausführbar</div>
<div class="t" style="top:206px;color:#000;transform:scaleX(1.0731);left:376px;">root @ root</div>
<div class="t" style="top:206px;color:#000;transform:scaleX(0.9594);left:452px;">21 Oct 2013 21:22:40</div>
<div class="t" style="top:223px;color:#000;transform:scaleX(1.0858);left:0px;">lrwxrwxrwx</div>
<div class="t" style="top:223px;color:#000;transform:scaleX(0.9676);left:-873px;width:1000px;text-align:right;transform-origin:100% 0;">6</div>
<div class="t" style="top:223px;color:#000;transform:scaleX(0.9588);left:130.5px;">@bzless</div>
<div class="t" style="top:223px;color:#000;transform:scaleX(0.9927);left:285px;">Shell-Script</div>
<div class="t" style="top:223px;color:#000;transform:scaleX(1.0731);left:376px;">root @ root</div>
<div class="t" style="top:223px;color:#000;transform:scaleX(0.9302);left:452px;">10 Jul 2014 00:58:29</div>
<div class="t" style="top:240px;color:#000;transform:scaleX(1.0572);left:0px;">-rwxr-xr-x</div>
<div class="t" style="top:240px;color:#000;transform:scaleX(0.9525);left:-873px;width:1000px;text-align:right;transform-origin:100% 0;">1,297</div>
<div class="t" style="top:240px;color:#000;transform:scaleX(1.0945);left:130.5px;">*bzmore</div>
<div class="t" style="top:240px;color:#000;transform:scaleX(0.9927);left:285px;">Shell-Script</div>
<div class="t" style="top:240px;color:#000;transform:scaleX(1.0731);left:376px;">root @ root</div>
<div class="t" style="top:240px;color:#000;transform:scaleX(0.9594);left:452px;">21 Oct 2013 21:22:37</div>
<div class="t" style="top:257px;color:#000;transform:scaleX(1.0572);left:0px;">-rwxr-xr-x</div>
<div class="t" style="top:257px;color:#000;transform:scaleX(0.9552);left:-873px;width:1000px;text-align:right;transform-origin:100% 0;">46,884</div>
<div class="t" style="top:257px;color:#000;transform:scaleX(1.1158);left:130.5px;">*cat</div>
<div class="t" style="top:257px;color:#000;left:285px;">ELF ausführbar</div>
<div class="t" style="top:257px;color:#000;transform:scaleX(1.0731);left:376px;">root @ root</div>
<div class="t" style="top:257px;color:#000;transform:scaleX(0.9666);left:452px;">24 Mar 2014 15:26:36</div>
<div class="t" style="top:274px;color:#000;transform:scaleX(1.0572);left:0px;">-rwxr-xr-x</div>
<div class="t" style="top:274px;color:#000;transform:scaleX(0.9525);left:-873px;width:1000px;text-align:right;transform-origin:100% 0;">9,764</div>
<div class="t" style="top:274px;color:#000;transform:scaleX(1.0446);left:130.5px;">*chacl</div>
<div class="t" style="top:274px;color:#000;left:285px;">ELF ausführbar</div>
<div class="t" style="top:274px;color:#000;transform:scaleX(1.0731);left:376px;">root @ root</div>
<div class="t" style="top:274px;color:#000;transform:scaleX(0.9658);left:452px;">23 May 2013 17:38:51</div>
<div class="t" style="top:291px;color:#000;transform:scaleX(1.0572);left:0px;">-rwxr-xr-x</div>
<div class="t" style="top:291px;color:#000;transform:scaleX(0.9552);left:-873px;width:1000px;text-align:right;transform-origin:100% 0;">55,048</div>
<div class="t" style="top:291px;color:#000;transform:scaleX(1.0906);left:130.5px;">*chgrp</div>
<div class="t" style="top:291px;color:#000;left:285px;">ELF ausführbar</div>
<div class="t" style="top:291px;color:#000;transform:scaleX(1.0731);left:376px;">root @ root</div>
<div class="t" style="top:291px;color:#000;transform:scaleX(0.9666);left:452px;">24 Mar 2014 15:26:36</div>
<div class="t" style="top:308px;color:#000;transform:scaleX(1.0572);left:0px;">-rwxr-xr-x</div>
<div class="t" style="top:308px;color:#000;transform:scaleX(0.9552);left:-873px;width:1000px;text-align:right;transform-origin:100% 0;">50,920</div>
<div class="t" style="top:308px;color:#000;transform:scaleX(1.1113);left:130.5px;">*chmod</div>
<div class="t" style="top:308px;color:#000;left:285px;">ELF ausführbar</div>
<div class="t" style="top:308px;color:#000;transform:scaleX(1.0731);left:376px;">root @ root</div>
<div class="t" style="top:308px;color:#000;transform:scaleX(0.9666);left:452px;">24 Mar 2014 15:26:36</div>
<div class="t" style="top:325px;color:#000;transform:scaleX(1.0572);left:0px;">-rwxr-xr-x</div>
<div class="t" style="top:325px;color:#000;transform:scaleX(0.9552);left:-873px;width:1000px;text-align:right;transform-origin:100% 0;">59,144</div>
<div class="t" style="top:325px;color:#000;transform:scaleX(1.1018);left:130.5px;">*chown</div>
<div class="t" style="top:325px;color:#000;left:285px;">ELF ausführbar</div>
<div class="t" style="top:325px;color:#000;transform:scaleX(1.0731);left:376px;">root @ root</div>
<div class="t" style="top:325px;color:#000;transform:scaleX(0.9666);left:452px;">24 Mar 2014 15:26:36</div>
<div class="t" style="top:342px;color:#000;transform:scaleX(1.0572);left:0px;">-rwxr-xr-x</div>
<div class="t" style="top:342px;color:#000;transform:scaleX(0.9525);left:-873px;width:1000px;text-align:right;transform-origin:100% 0;">9,708</div>
<div class="t" style="top:342px;color:#000;transform:scaleX(1.1416);left:130.5px;">*chvt</div>
<div class="t" style="top:342px;color:#000;left:285px;">ELF ausführbar</div>
<div class="t" style="top:342px;color:#000;transform:scaleX(1.0731);left:376px;">root @ root</div>
<div class="t" style="top:342px;color:#000;transform:scaleX(0.9508);left:452px;">19 Feb 2013 01:38:41</div>
<div class="t" style="top:359px;color:#000;transform:scaleX(1.0572);left:0px;">-rwxr-xr-x</div>
<div class="t" style="top:359px;color:#000;transform:scaleX(0.9571);left:-873px;width:1000px;text-align:right;transform-origin:100% 0;">124,932</div>
<div class="t" style="top:359px;color:#000;transform:scaleX(1.1172);left:130.5px;">*cp</div>
<div class="t" style="top:359px;color:#000;left:285px;">ELF ausführbar</div>
<div class="t" style="top:359px;color:#000;transform:scaleX(1.0731);left:376px;">root @ root</div>
<div class="t" style="top:359px;color:#000;transform:scaleX(0.9666);left:452px;">24 Mar 2014 15:26:36</div>
<div class="t" style="top:376px;color:#000;transform:scaleX(1.0572);left:0px;">-rwxr-xr-x</div>
<div class="t" style="top:376px;color:#000;transform:scaleX(0.9571);left:-873px;width:1000px;text-align:right;transform-origin:100% 0;">138,900</div>
<div class="t" style="top:376px;color:#000;transform:scaleX(1.1064);left:130.5px;">*cpio</div>
<div class="t" style="top:376px;color:#000;left:285px;">ELF ausführbar</div>
<div class="t" style="top:376px;color:#000;transform:scaleX(1.0731);left:376px;">root @ root</div>
<div class="t" style="top:376px;color:#000;transform:scaleX(0.9378);left:452px;">02 Jun 2013 20:27:56</div>
<div class="t" style="top:393px;color:#000;transform:scaleX(1.0572);left:0px;">-rwxr-xr-x</div>
<div class="t" style="top:393px;color:#000;transform:scaleX(0.9773);left:-873px;width:1000px;text-align:right;transform-origin:100% 0;">112,204</div>
<div class="t" style="top:393px;color:#000;transform:scaleX(1.0822);left:130.5px;">*dash</div>
<div class="t" style="top:393px;color:#000;left:285px;">ELF ausführbar</div>
<div class="t" style="top:393px;color:#000;transform:scaleX(1.0731);left:376px;">root @ root</div>
<div class="t" style="top:393px;color:#000;transform:scaleX(0.9508);left:452px;">19 Feb 2014 20:35:32</div>
<div class="t" style="top:410px;color:#000;transform:scaleX(1.0572);left:0px;">-rwxr-xr-x</div>
<div class="t" style="top:410px;color:#000;transform:scaleX(0.9552);left:-873px;width:1000px;text-align:right;transform-origin:100% 0;">59,144</div>
<div class="t" style="top:410px;color:#000;transform:scaleX(1.1193);left:130.5px;">*date</div>
<div class="t" style="top:410px;color:#000;left:285px;">ELF ausführbar</div>
<div class="t" style="top:410px;color:#000;transform:scaleX(1.0731);left:376px;">root @ root</div>
<div class="t" style="top:410px;color:#000;transform:scaleX(0.9666);left:452px;">24 Mar 2014 15:26:36</div>
<div class="t" style="top:427px;color:#000;transform:scaleX(1.0572);left:0px;">-rwxr-xr-x</div>
<div class="t" style="top:427px;color:#000;transform:scaleX(0.9525);left:-873px;width:1000px;text-align:right;transform-origin:100% 0;">9,736</div>
<div class="t" style="top:427px;color:#000;transform:scaleX(1.0413);left:130.5px;">*dbus-cleanup-sockets</div>
<div class="t" style="top:427px;color:#000;left:285px;">ELF ausführbar</div>
<div class="t" style="top:427px;color:#000;transform:scaleX(1.0731);left:376px;">root @ root</div>
<div class="t" style="top:427px;color:#000;transform:scaleX(0.9648);left:452px;">02 Apr 2014 08:17:10</div>
<div class="t" style="top:444px;color:#000;transform:scaleX(1.0572);left:0px;">-rwxr-xr-x</div>
<div class="t" style="top:444px;color:#000;transform:scaleX(0.9571);left:-873px;width:1000px;text-align:right;transform-origin:100% 0;">444,760</div>
<div class="t" style="top:444px;color:#000;transform:scaleX(1.0757);left:130.5px;">*dbus-daemon</div>
<div class="t" style="top:444px;color:#000;left:285px;">ELF ausführbar</div>
<div class="t" style="top:444px;color:#000;transform:scaleX(1.0731);left:376px;">root @ root</div>
<div class="t" style="top:444px;color:#000;transform:scaleX(0.9648);left:452px;">02 Apr 2014 08:17:10</div>
<div class="t" style="top:461px;color:#000;transform:scaleX(1.0572);left:0px;">-rwxr-xr-x</div>
<div class="t" style="top:461px;color:#000;transform:scaleX(0.9525);left:-873px;width:1000px;text-align:right;transform-origin:100% 0;">5,604</div>
<div class="t" style="top:461px;color:#000;transform:scaleX(1.0728);left:130.5px;">*dbus-uuidgen</div>
<div class="t" style="top:461px;color:#000;left:285px;">ELF ausführbar</div>
<div class="t" style="top:461px;color:#000;transform:scaleX(1.0731);left:376px;">root @ root</div>
<div class="t" style="top:461px;color:#000;transform:scaleX(0.9648);left:452px;">02 Apr 2014 08:17:10</div>
</div>
<div style="position:absolute;left:542px;top:98px;width:11px;height:502px;background:#fff;"></div>
<div style="position:absolute;left:542px;top:99px;width:11px;height:501px;background:#c8c6c1;"></div>
<div style="position:absolute;left:547px;top:100px;width:1px;height:2px;background:#000;"></div>
<div style="position:absolute;left:546px;top:102px;width:3px;height:2px;background:#000;"></div>
<div style="position:absolute;left:545px;top:104px;width:5px;height:2px;background:#000;"></div>
<div style="position:absolute;left:544px;top:106px;width:7px;height:2px;background:#000;"></div>
<div style="position:absolute;left:542px;top:109px;width:11px;height:1px;background:#000;"></div>
<div style="position:absolute;left:543px;top:110px;width:10px;height:478px;background:#fff;"></div>
<div style="position:absolute;left:544px;top:111px;width:9px;height:477px;background:#c8c6c1;"></div>
<div style="position:absolute;left:552px;top:110px;width:1px;height:479px;background:#000;"></div>
<div style="position:absolute;left:542px;top:110px;width:1px;height:479px;background:#fff;"></div>
<div style="position:absolute;left:543px;top:588px;width:10px;height:1px;background:#000;"></div>
<div style="position:absolute;left:542px;top:589px;width:11px;height:1px;background:#fff;"></div>
<div style="position:absolute;left:547px;top:597px;width:1px;height:2px;background:#000;"></div>
<div style="position:absolute;left:546px;top:595px;width:3px;height:2px;background:#000;"></div>
<div style="position:absolute;left:545px;top:593px;width:5px;height:2px;background:#000;"></div>
<div style="position:absolute;left:544px;top:591px;width:7px;height:2px;background:#000;"></div>
<div style="position:absolute;left:553px;top:98px;width:2px;height:516px;background:#000;"></div>
<div style="position:absolute;left:555px;top:98px;width:12px;height:502px;background:#fff;"></div>
<div style="position:absolute;left:557px;top:99px;width:10px;height:501px;background:#c8c6c1;"></div>
<div style="position:absolute;left:555px;top:98px;width:2px;height:502px;background:#fff;"></div>
<div style="position:absolute;left:561px;top:100px;width:1px;height:2px;background:#000;"></div>
<div style="position:absolute;left:560px;top:102px;width:3px;height:2px;background:#000;"></div>
<div style="position:absolute;left:559px;top:104px;width:5px;height:2px;background:#000;"></div>
<div style="position:absolute;left:558px;top:106px;width:7px;height:2px;background:#000;"></div>
<div style="position:absolute;left:556px;top:109px;width:11px;height:1px;background:#000;"></div>
<div style="position:absolute;left:557px;top:110px;width:10px;height:88px;background:#fff;"></div>
<div style="position:absolute;left:558px;top:111px;width:9px;height:87px;background:#c8c6c1;"></div>
<div style="position:absolute;left:557px;top:196px;width:10px;height:1px;background:#000;"></div>
<div style="position:absolute;left:566px;top:110px;width:1px;height:87px;background:#000;"></div>
<div style="position:absolute;left:557px;top:197px;width:10px;height:392px;background:#b2b0aa;"></div>
<div style="position:absolute;left:557px;top:589px;width:10px;height:1px;background:#fff;"></div>
<div style="position:absolute;left:561px;top:597px;width:1px;height:2px;background:#000;"></div>
<div style="position:absolute;left:560px;top:595px;width:3px;height:2px;background:#000;"></div>
<div style="position:absolute;left:559px;top:593px;width:5px;height:2px;background:#000;"></div>
<div style="position:absolute;left:558px;top:591px;width:7px;height:2px;background:#000;"></div>
<div style="position:absolute;left:567px;top:98px;width:1px;height:503px;background:#000;"></div>
<div style="position:absolute;left:2px;top:601px;width:540px;height:11px;background:#fff;"></div>
<div style="position:absolute;left:4px;top:602px;width:10px;height:10px;background:#c8c6c1;"></div>
<div style="position:absolute;left:5px;top:606px;width:2px;height:1px;background:#000;"></div>
<div style="position:absolute;left:7px;top:605px;width:2px;height:3px;background:#000;"></div>
<div style="position:absolute;left:9px;top:604px;width:2px;height:5px;background:#000;"></div>
<div style="position:absolute;left:11px;top:603px;width:2px;height:7px;background:#000;"></div>
<div style="position:absolute;left:14px;top:601px;width:1px;height:11px;background:#000;"></div>
<div style="position:absolute;left:15px;top:602px;width:389px;height:10px;background:#fff;"></div>
<div style="position:absolute;left:16px;top:603px;width:388px;height:8px;background:#c8c6c1;"></div>
<div style="position:absolute;left:16px;top:611px;width:388px;height:1px;background:#000;"></div>
<div style="position:absolute;left:404px;top:602px;width:1px;height:10px;background:#000;"></div>
<div style="position:absolute;left:405px;top:602px;width:125px;height:10px;background:#b2b0aa;"></div>
<div style="position:absolute;left:530px;top:602px;width:11px;height:10px;background:#fff;"></div>
<div style="position:absolute;left:531px;top:603px;width:10px;height:9px;background:#c8c6c1;"></div>
<div style="position:absolute;left:538px;top:606px;width:2px;height:1px;background:#000;"></div>
<div style="position:absolute;left:536px;top:605px;width:2px;height:3px;background:#000;"></div>
<div style="position:absolute;left:534px;top:604px;width:2px;height:5px;background:#000;"></div>
<div style="position:absolute;left:532px;top:603px;width:2px;height:7px;background:#000;"></div>
<div style="position:absolute;left:541px;top:600px;width:1px;height:12px;background:#000;"></div>
<div style="position:absolute;left:542px;top:600px;width:11px;height:1px;background:#000;"></div>
<div style="position:absolute;left:542px;top:601px;width:11px;height:11px;background:#c8c6c1;"></div>
<div style="position:absolute;left:555px;top:600px;width:2px;height:12px;background:#fff;"></div>
<div style="position:absolute;left:556px;top:600px;width:12px;height:1px;background:#000;"></div>
<div style="position:absolute;left:557px;top:601px;width:11px;height:11px;background:#c8c6c1;"></div>
<div style="position:absolute;left:568px;top:601px;width:535px;height:11px;background:#fff;"></div>
<div style="position:absolute;left:569px;top:602px;width:10px;height:10px;background:#c8c6c1;"></div>
<div style="position:absolute;left:570px;top:606px;width:2px;height:1px;background:#000;"></div>
<div style="position:absolute;left:572px;top:605px;width:2px;height:3px;background:#000;"></div>
<div style="position:absolute;left:574px;top:604px;width:2px;height:5px;background:#000;"></div>
<div style="position:absolute;left:576px;top:603px;width:2px;height:7px;background:#000;"></div>
<div style="position:absolute;left:579px;top:601px;width:1px;height:11px;background:#000;"></div>
<div style="position:absolute;left:580px;top:602px;width:382px;height:10px;background:#fff;"></div>
<div style="position:absolute;left:581px;top:603px;width:381px;height:8px;background:#c8c6c1;"></div>
<div style="position:absolute;left:581px;top:611px;width:381px;height:1px;background:#000;"></div>
<div style="position:absolute;left:962px;top:602px;width:1px;height:10px;background:#000;"></div>
<div style="position:absolute;left:963px;top:602px;width:128px;height:10px;background:#b2b0aa;"></div>
<div style="position:absolute;left:1091px;top:602px;width:11px;height:10px;background:#fff;"></div>
<div style="position:absolute;left:1092px;top:603px;width:10px;height:9px;background:#c8c6c1;"></div>
<div style="position:absolute;left:1099px;top:606px;width:2px;height:1px;background:#000;"></div>
<div style="position:absolute;left:1097px;top:605px;width:2px;height:3px;background:#000;"></div>
<div style="position:absolute;left:1095px;top:604px;width:2px;height:5px;background:#000;"></div>
<div style="position:absolute;left:1093px;top:603px;width:2px;height:7px;background:#000;"></div>
<div style="position:absolute;left:1102px;top:601px;width:1px;height:11px;background:#000;"></div>
<div style="position:absolute;left:2px;top:612px;width:1101px;height:2px;background:#000;"></div>
<div style="position:absolute;left:2px;top:614px;width:15px;height:24px;background:#fff;"></div>
<div style="position:absolute;left:3px;top:615px;width:14px;height:23px;background:#c8c6c1;"></div>
<div style="position:absolute;left:17px;top:614px;width:1px;height:24px;background:#000;"></div>
<div class="t" style="top:619px;color:#000;transform:scaleX(0.8312);left:7.3px;">..</div>
<div style="position:absolute;left:18px;top:614px;width:16px;height:24px;background:#fff;"></div>
<div style="position:absolute;left:19px;top:615px;width:15px;height:23px;background:#c8c6c1;"></div>
<div style="position:absolute;left:34px;top:614px;width:1px;height:24px;background:#000;"></div>
<div class="t" style="top:619px;color:#000;transform:scaleX(0.9218);left:23px;">&lt;</div>
<div style="position:absolute;left:35px;top:614px;width:482px;height:24px;background:#c8c6c1;"></div>
<div style="position:absolute;left:35px;top:614px;width:482px;height:2px;background:#fff;"></div>
<div style="position:absolute;left:35px;top:614px;width:2px;height:24px;background:#fff;"></div>
<div style="position:absolute;left:37px;top:616px;width:479px;height:1px;background:#000;"></div>
<div style="position:absolute;left:37px;top:616px;width:1px;height:21px;background:#000;"></div>
<div style="position:absolute;left:515px;top:616px;width:1px;height:21px;background:#fff;"></div>
<div style="position:absolute;left:37px;top:636px;width:479px;height:1px;background:#fff;"></div>
<div style="position:absolute;left:517px;top:614px;width:1px;height:24px;background:#000;"></div>
<div class="t" style="top:619px;color:#000;transform:scaleX(1.3853);left:40px;">/</div>
<div style="position:absolute;left:518px;top:614px;width:16px;height:24px;background:#fff;"></div>
<div style="position:absolute;left:519px;top:615px;width:15px;height:23px;background:#c8c6c1;"></div>
<div style="position:absolute;left:534px;top:614px;width:1px;height:24px;background:#000;"></div>
<div class="t" style="top:619px;color:#000;transform:scaleX(0.9218);left:523.5px;">&gt;</div>
<div style="position:absolute;left:535px;top:614px;width:19px;height:24px;background:#fff;"></div>
<div style="position:absolute;left:536px;top:615px;width:18px;height:23px;background:#c8c6c1;"></div>
<div style="position:absolute;left:554px;top:614px;width:1px;height:24px;background:#000;"></div>
<div class="t" style="top:619px;color:#000;transform:scaleX(0.9892);left:540px;">O</div>
<div style="position:absolute;left:555px;top:614px;width:19px;height:24px;background:#fff;"></div>
<div style="position:absolute;left:556px;top:615px;width:18px;height:23px;background:#c8c6c1;"></div>
<div style="position:absolute;left:574px;top:614px;width:1px;height:24px;background:#000;"></div>
<div class="t" style="top:619px;color:#000;transform:scaleX(0.9892);left:560px;">O</div>
<div style="position:absolute;left:575px;top:614px;width:16px;height:24px;background:#fff;"></div>
<div style="position:absolute;left:576px;top:615px;width:15px;height:23px;background:#c8c6c1;"></div>
<div style="position:absolute;left:591px;top:614px;width:1px;height:24px;background:#000;"></div>
<div class="t" style="top:619px;color:#000;transform:scaleX(0.9218);left:580px;">&lt;</div>
<div style="position:absolute;left:592px;top:614px;width:478px;height:24px;background:#c8c6c1;"></div>
<div style="position:absolute;left:592px;top:614px;width:478px;height:2px;background:#fff;"></div>
<div style="position:absolute;left:592px;top:614px;width:2px;height:24px;background:#fff;"></div>
<div style="position:absolute;left:594px;top:616px;width:475px;height:1px;background:#000;"></div>
<div style="position:absolute;left:594px;top:616px;width:1px;height:21px;background:#000;"></div>
<div style="position:absolute;left:1068px;top:616px;width:1px;height:21px;background:#fff;"></div>
<div style="position:absolute;left:594px;top:636px;width:475px;height:1px;background:#fff;"></div>
<div style="position:absolute;left:1070px;top:614px;width:1px;height:24px;background:#000;"></div>
<div class="t" style="top:619px;color:#000;transform:scaleX(1.1446);left:597px;">/bin</div>
<div style="position:absolute;left:1071px;top:614px;width:16px;height:24px;background:#fff;"></div>
<div style="position:absolute;left:1072px;top:615px;width:15px;height:23px;background:#c8c6c1;"></div>
<div style="position:absolute;left:1087px;top:614px;width:1px;height:24px;background:#000;"></div>
<div class="t" style="top:619px;color:#000;transform:scaleX(0.9218);left:1075.5px;">&gt;</div>
<div style="position:absolute;left:1088px;top:614px;width:15px;height:24px;background:#fff;"></div>
<div style="position:absolute;left:1089px;top:615px;width:14px;height:23px;background:#c8c6c1;"></div>
<div style="position:absolute;left:1103px;top:614px;width:1px;height:24px;background:#000;"></div>
<div class="t" style="top:619px;color:#000;transform:scaleX(0.8312);left:1092px;">..</div>
<div style="position:absolute;left:2px;top:638px;width:1101px;height:1px;background:#000;"></div>
<div style="position:absolute;left:2px;top:639px;width:135px;height:20px;background:#fff;"></div>
<div style="position:absolute;left:3px;top:640px;width:134px;height:19px;background:#c8c6c1;"></div>
<div style="position:absolute;left:137px;top:639px;width:1px;height:21px;background:#000;"></div>
<div style="position:absolute;left:2px;top:659px;width:136px;height:1px;background:#000;"></div>
<div class="t" style="top:642px;color:#000;transform:scaleX(0.9949);left:-430.5px;width:1000px;text-align:center;transform-origin:50% 0;">$HOME</div>
<div style="position:absolute;left:138px;top:639px;width:135px;height:20px;background:#fff;"></div>
<div style="position:absolute;left:139px;top:640px;width:134px;height:19px;background:#c8c6c1;"></div>
<div style="position:absolute;left:273px;top:639px;width:1px;height:21px;background:#000;"></div>
<div style="position:absolute;left:138px;top:659px;width:136px;height:1px;background:#000;"></div>
<svg style="position:absolute;left:265px;top:639px" width="9" height="9" viewBox="0 0 9 9"><rect x="0" y="0" width="9" height="9" fill="#c8c6c1"/><path d="M0.5 0.5 L0.5 8.5 L8.5 8.5 Z" fill="#fff"/><path d="M0.5 0 L0.5 8.5 L8.5 8.5 M0.5 0.5 L8.5 8.5" stroke="#000" stroke-width="1" fill="none"/></svg>
<div class="t" style="top:642px;color:#000;transform:scaleX(0.9722);left:-294.5px;width:1000px;text-align:center;transform-origin:50% 0;">F3 - Anzeigen</div>
<div style="position:absolute;left:274px;top:639px;width:135px;height:20px;background:#fff;"></div>
<div style="position:absolute;left:275px;top:640px;width:134px;height:19px;background:#c8c6c1;"></div>
<div style="position:absolute;left:409px;top:639px;width:1px;height:21px;background:#000;"></div>
<div style="position:absolute;left:274px;top:659px;width:136px;height:1px;background:#000;"></div>
<svg style="position:absolute;left:401px;top:639px" width="9" height="9" viewBox="0 0 9 9"><rect x="0" y="0" width="9" height="9" fill="#c8c6c1"/><path d="M0.5 0.5 L0.5 8.5 L8.5 8.5 Z" fill="#fff"/><path d="M0.5 0 L0.5 8.5 L8.5 8.5 M0.5 0.5 L8.5 8.5" stroke="#000" stroke-width="1" fill="none"/></svg>
<div class="t" style="top:642px;color:#000;transform:scaleX(0.9930);left:-158.5px;width:1000px;text-align:center;transform-origin:50% 0;">F4 - Bearbeiten</div>
<div style="position:absolute;left:410px;top:639px;width:135px;height:20px;background:#fff;"></div>
<div style="position:absolute;left:411px;top:640px;width:134px;height:19px;background:#c8c6c1;"></div>
<div style="position:absolute;left:545px;top:639px;width:1px;height:21px;background:#000;"></div>
<div style="position:absolute;left:410px;top:659px;width:136px;height:1px;background:#000;"></div>
<svg style="position:absolute;left:537px;top:639px" width="9" height="9" viewBox="0 0 9 9"><rect x="0" y="0" width="9" height="9" fill="#c8c6c1"/><path d="M0.5 0.5 L0.5 8.5 L8.5 8.5 Z" fill="#fff"/><path d="M0.5 0 L0.5 8.5 L8.5 8.5 M0.5 0.5 L8.5 8.5" stroke="#000" stroke-width="1" fill="none"/></svg>
<div class="t" style="top:642px;color:#000;transform:scaleX(0.9901);left:-22.5px;width:1000px;text-align:center;transform-origin:50% 0;">F5 - Kopieren</div>
<div style="position:absolute;left:546px;top:639px;width:135px;height:20px;background:#fff;"></div>
<div style="position:absolute;left:547px;top:640px;width:134px;height:19px;background:#c8c6c1;"></div>
<div style="position:absolute;left:681px;top:639px;width:1px;height:21px;background:#000;"></div>
<div style="position:absolute;left:546px;top:659px;width:136px;height:1px;background:#000;"></div>
<svg style="position:absolute;left:673px;top:639px" width="9" height="9" viewBox="0 0 9 9"><rect x="0" y="0" width="9" height="9" fill="#c8c6c1"/><path d="M0.5 0.5 L0.5 8.5 L8.5 8.5 Z" fill="#fff"/><path d="M0.5 0 L0.5 8.5 L8.5 8.5 M0.5 0.5 L8.5 8.5" stroke="#000" stroke-width="1" fill="none"/></svg>
<div class="t" style="top:642px;color:#000;transform:scaleX(0.9868);left:113.5px;width:1000px;text-align:center;transform-origin:50% 0;">F6 - Verschieben</div>
<div style="position:absolute;left:682px;top:639px;width:135px;height:20px;background:#fff;"></div>
<div style="position:absolute;left:683px;top:640px;width:134px;height:19px;background:#c8c6c1;"></div>
<div style="position:absolute;left:817px;top:639px;width:1px;height:21px;background:#000;"></div>
<div style="position:absolute;left:682px;top:659px;width:136px;height:1px;background:#000;"></div>
<svg style="position:absolute;left:809px;top:639px" width="9" height="9" viewBox="0 0 9 9"><rect x="0" y="0" width="9" height="9" fill="#c8c6c1"/><path d="M0.5 0.5 L0.5 8.5 L8.5 8.5 Z" fill="#fff"/><path d="M0.5 0 L0.5 8.5 L8.5 8.5 M0.5 0.5 L8.5 8.5" stroke="#000" stroke-width="1" fill="none"/></svg>
<div class="t" style="top:642px;color:#000;transform:scaleX(1.0419);left:249.5px;width:1000px;text-align:center;transform-origin:50% 0;">NameNeu</div>
<div style="position:absolute;left:818px;top:639px;width:136px;height:20px;background:#fff;"></div>
<div style="position:absolute;left:819px;top:640px;width:135px;height:19px;background:#c8c6c1;"></div>
<div style="position:absolute;left:954px;top:639px;width:1px;height:21px;background:#000;"></div>
<div style="position:absolute;left:818px;top:659px;width:137px;height:1px;background:#000;"></div>
<div class="t" style="top:642px;color:#000;transform:scaleX(0.9740);left:386.0px;width:1000px;text-align:center;transform-origin:50% 0;">F7 - Neue Dir</div>
<div style="position:absolute;left:955px;top:639px;width:136px;height:20px;background:#fff;"></div>
<div style="position:absolute;left:956px;top:640px;width:135px;height:19px;background:#c8c6c1;"></div>
<div style="position:absolute;left:1091px;top:639px;width:1px;height:21px;background:#000;"></div>
<div style="position:absolute;left:955px;top:659px;width:137px;height:1px;background:#000;"></div>
<div class="t" style="top:642px;color:#000;transform:scaleX(0.9266);left:523.0px;width:1000px;text-align:center;transform-origin:50% 0;">F8 - LÖSCHEN</div>
<div style="position:absolute;left:2px;top:660px;width:135px;height:20px;background:#fff;"></div>
<div style="position:absolute;left:3px;top:661px;width:134px;height:19px;background:#c8c6c1;"></div>
<div style="position:absolute;left:137px;top:660px;width:1px;height:21px;background:#000;"></div>
<div style="position:absolute;left:2px;top:680px;width:136px;height:1px;background:#000;"></div>
<div class="t" style="top:663px;color:#000;transform:scaleX(1.3853);left:-430.5px;width:1000px;text-align:center;transform-origin:50% 0;">/</div>
<div style="position:absolute;left:138px;top:660px;width:135px;height:20px;background:#fff;"></div>
<div style="position:absolute;left:139px;top:661px;width:134px;height:19px;background:#c8c6c1;"></div>
<div style="position:absolute;left:273px;top:660px;width:1px;height:21px;background:#000;"></div>
<div style="position:absolute;left:138px;top:680px;width:136px;height:1px;background:#000;"></div>
<svg style="position:absolute;left:265px;top:660px" width="9" height="9" viewBox="0 0 9 9"><rect x="0" y="0" width="9" height="9" fill="#c8c6c1"/><path d="M0.5 0.5 L0.5 8.5 L8.5 8.5 Z" fill="#fff"/><path d="M0.5 0 L0.5 8.5 L8.5 8.5 M0.5 0.5 L8.5 8.5" stroke="#000" stroke-width="1" fill="none"/></svg>
<div class="t" style="top:663px;color:#000;transform:scaleX(0.9683);left:-294.5px;width:1000px;text-align:center;transform-origin:50% 0;">Alle</div>
<div style="position:absolute;left:274px;top:660px;width:135px;height:20px;background:#fff;"></div>
<div style="position:absolute;left:275px;top:661px;width:134px;height:19px;background:#c8c6c1;"></div>
<div style="position:absolute;left:409px;top:660px;width:1px;height:21px;background:#000;"></div>
<div style="position:absolute;left:274px;top:680px;width:136px;height:1px;background:#000;"></div>
<svg style="position:absolute;left:401px;top:660px" width="9" height="9" viewBox="0 0 9 9"><rect x="0" y="0" width="9" height="9" fill="#c8c6c1"/><path d="M0.5 0.5 L0.5 8.5 L8.5 8.5 Z" fill="#fff"/><path d="M0.5 0 L0.5 8.5 L8.5 8.5 M0.5 0.5 L8.5 8.5" stroke="#000" stroke-width="1" fill="none"/></svg>
<div class="t" style="top:663px;color:#000;transform:scaleX(1.0503);left:-158.5px;width:1000px;text-align:center;transform-origin:50% 0;">Umkehren</div>
<div style="position:absolute;left:410px;top:660px;width:135px;height:20px;background:#fff;"></div>
<div style="position:absolute;left:411px;top:661px;width:134px;height:19px;background:#c8c6c1;"></div>
<div style="position:absolute;left:545px;top:660px;width:1px;height:21px;background:#000;"></div>
<div style="position:absolute;left:410px;top:680px;width:136px;height:1px;background:#000;"></div>
<svg style="position:absolute;left:537px;top:660px" width="9" height="9" viewBox="0 0 9 9"><rect x="0" y="0" width="9" height="9" fill="#c8c6c1"/><path d="M0.5 0.5 L0.5 8.5 L8.5 8.5 Z" fill="#fff"/><path d="M0.5 0 L0.5 8.5 L8.5 8.5 M0.5 0.5 L8.5 8.5" stroke="#000" stroke-width="1" fill="none"/></svg>
<div class="t" style="top:663px;color:#000;transform:scaleX(1.0496);left:-22.5px;width:1000px;text-align:center;transform-origin:50% 0;">Starten</div>
<div style="position:absolute;left:546px;top:660px;width:135px;height:20px;background:#fff;"></div>
<div style="position:absolute;left:547px;top:661px;width:134px;height:19px;background:#c8c6c1;"></div>
<div style="position:absolute;left:681px;top:660px;width:1px;height:21px;background:#000;"></div>
<div style="position:absolute;left:546px;top:680px;width:136px;height:1px;background:#000;"></div>
<div class="t" style="top:663px;color:#000;transform:scaleX(1.0298);left:113.5px;width:1000px;text-align:center;transform-origin:50% 0;">Duplizieren</div>
<div style="position:absolute;left:682px;top:660px;width:135px;height:20px;background:#fff;"></div>
<div style="position:absolute;left:683px;top:661px;width:134px;height:19px;background:#c8c6c1;"></div>
<div style="position:absolute;left:817px;top:660px;width:1px;height:21px;background:#000;"></div>
<div style="position:absolute;left:682px;top:680px;width:136px;height:1px;background:#000;"></div>
<svg style="position:absolute;left:809px;top:660px" width="9" height="9" viewBox="0 0 9 9"><rect x="0" y="0" width="9" height="9" fill="#c8c6c1"/><path d="M0.5 0.5 L0.5 8.5 L8.5 8.5 Z" fill="#fff"/><path d="M0.5 0 L0.5 8.5 L8.5 8.5 M0.5 0.5 L8.5 8.5" stroke="#000" stroke-width="1" fill="none"/></svg>
<div class="t" style="top:663px;color:#000;transform:scaleX(1.0287);left:249.5px;width:1000px;text-align:center;transform-origin:50% 0;">Neu laden</div>
<div style="position:absolute;left:818px;top:660px;width:136px;height:20px;background:#fff;"></div>
<div style="position:absolute;left:819px;top:661px;width:135px;height:19px;background:#c8c6c1;"></div>
<div style="position:absolute;left:954px;top:660px;width:1px;height:21px;background:#000;"></div>
<div style="position:absolute;left:818px;top:680px;width:137px;height:1px;background:#000;"></div>
<svg style="position:absolute;left:946px;top:660px" width="9" height="9" viewBox="0 0 9 9"><rect x="0" y="0" width="9" height="9" fill="#c8c6c1"/><path d="M0.5 0.5 L0.5 8.5 L8.5 8.5 Z" fill="#fff"/><path d="M0.5 0 L0.5 8.5 L8.5 8.5 M0.5 0.5 L8.5 8.5" stroke="#000" stroke-width="1" fill="none"/></svg>
<div class="t" style="top:663px;color:#000;transform:scaleX(1.0144);left:386.0px;width:1000px;text-align:center;transform-origin:50% 0;">Datei suchen</div>
<div style="position:absolute;left:955px;top:660px;width:136px;height:20px;background:#fff;"></div>
<div style="position:absolute;left:956px;top:661px;width:135px;height:19px;background:#c8c6c1;"></div>
<div style="position:absolute;left:1091px;top:660px;width:1px;height:21px;background:#000;"></div>
<div style="position:absolute;left:955px;top:680px;width:137px;height:1px;background:#000;"></div>
<div class="t" style="top:663px;color:#000;transform:scaleX(1.0152);left:523.0px;width:1000px;text-align:center;transform-origin:50% 0;">Verzeichnisgröße</div>
<div style="position:absolute;left:2px;top:681px;width:135px;height:20px;background:#fff;"></div>
<div style="position:absolute;left:3px;top:682px;width:134px;height:19px;background:#c8c6c1;"></div>
<div style="position:absolute;left:137px;top:681px;width:1px;height:21px;background:#000;"></div>
<div style="position:absolute;left:2px;top:701px;width:136px;height:1px;background:#000;"></div>
<div class="t" style="top:684px;color:#000;transform:scaleX(1.1867);left:-430.5px;width:1000px;text-align:center;transform-origin:50% 0;">/tmp</div>
<div style="position:absolute;left:138px;top:681px;width:135px;height:20px;background:#fff;"></div>
<div style="position:absolute;left:139px;top:682px;width:134px;height:19px;background:#c8c6c1;"></div>
<div style="position:absolute;left:273px;top:681px;width:1px;height:21px;background:#000;"></div>
<div style="position:absolute;left:138px;top:701px;width:136px;height:1px;background:#000;"></div>
<svg style="position:absolute;left:265px;top:681px" width="9" height="9" viewBox="0 0 9 9"><rect x="0" y="0" width="9" height="9" fill="#c8c6c1"/><path d="M0.5 0.5 L0.5 8.5 L8.5 8.5 Z" fill="#fff"/><path d="M0.5 0 L0.5 8.5 L8.5 8.5 M0.5 0.5 L8.5 8.5" stroke="#000" stroke-width="1" fill="none"/></svg>
<div class="t" style="top:684px;color:#000;transform:scaleX(1.0411);left:-294.5px;width:1000px;text-align:center;transform-origin:50% 0;">Filter ändern</div>
<div style="position:absolute;left:274px;top:681px;width:135px;height:20px;background:#fff;"></div>
<div style="position:absolute;left:275px;top:682px;width:134px;height:19px;background:#c8c6c1;"></div>
<div style="position:absolute;left:409px;top:681px;width:1px;height:21px;background:#000;"></div>
<div style="position:absolute;left:274px;top:701px;width:136px;height:1px;background:#000;"></div>
<div class="t" style="top:684px;color:#000;transform:scaleX(1.0675);left:-158.5px;width:1000px;text-align:center;transform-origin:50% 0;">Hidden</div>
<div style="position:absolute;left:410px;top:681px;width:135px;height:20px;background:#fff;"></div>
<div style="position:absolute;left:411px;top:682px;width:134px;height:19px;background:#c8c6c1;"></div>
<div style="position:absolute;left:545px;top:681px;width:1px;height:21px;background:#000;"></div>
<div style="position:absolute;left:410px;top:701px;width:136px;height:1px;background:#000;"></div>
<svg style="position:absolute;left:537px;top:681px" width="9" height="9" viewBox="0 0 9 9"><rect x="0" y="0" width="9" height="9" fill="#c8c6c1"/><path d="M0.5 0.5 L0.5 8.5 L8.5 8.5 Z" fill="#fff"/><path d="M0.5 0 L0.5 8.5 L8.5 8.5 M0.5 0.5 L8.5 8.5" stroke="#000" stroke-width="1" fill="none"/></svg>
<div class="t" style="top:684px;color:#000;transform:scaleX(1.0326);left:-22.5px;width:1000px;text-align:center;transform-origin:50% 0;">Symlink</div>
<div style="position:absolute;left:546px;top:681px;width:135px;height:20px;background:#fff;"></div>
<div style="position:absolute;left:547px;top:682px;width:134px;height:19px;background:#c8c6c1;"></div>
<div style="position:absolute;left:681px;top:681px;width:1px;height:21px;background:#000;"></div>
<div style="position:absolute;left:546px;top:701px;width:136px;height:1px;background:#000;"></div>
<svg style="position:absolute;left:673px;top:681px" width="9" height="9" viewBox="0 0 9 9"><rect x="0" y="0" width="9" height="9" fill="#c8c6c1"/><path d="M0.5 0.5 L0.5 8.5 L8.5 8.5 Z" fill="#fff"/><path d="M0.5 0 L0.5 8.5 L8.5 8.5 M0.5 0.5 L8.5 8.5" stroke="#000" stroke-width="1" fill="none"/></svg>
<div class="t" style="top:684px;color:#000;left:113.5px;width:1000px;text-align:center;transform-origin:50% 0;">CHMOD</div>
<div style="position:absolute;left:682px;top:681px;width:135px;height:20px;background:#fff;"></div>
<div style="position:absolute;left:683px;top:682px;width:134px;height:19px;background:#c8c6c1;"></div>
<div style="position:absolute;left:817px;top:681px;width:1px;height:21px;background:#000;"></div>
<div style="position:absolute;left:682px;top:701px;width:136px;height:1px;background:#000;"></div>
<svg style="position:absolute;left:809px;top:681px" width="9" height="9" viewBox="0 0 9 9"><rect x="0" y="0" width="9" height="9" fill="#c8c6c1"/><path d="M0.5 0.5 L0.5 8.5 L8.5 8.5 Z" fill="#fff"/><path d="M0.5 0 L0.5 8.5 L8.5 8.5 M0.5 0.5 L8.5 8.5" stroke="#000" stroke-width="1" fill="none"/></svg>
<div class="t" style="top:684px;color:#000;transform:scaleX(0.9859);left:249.5px;width:1000px;text-align:center;transform-origin:50% 0;">Lesezeichen</div>
<div style="position:absolute;left:818px;top:681px;width:136px;height:20px;background:#fff;"></div>
<div style="position:absolute;left:819px;top:682px;width:135px;height:19px;background:#c8c6c1;"></div>
<div style="position:absolute;left:954px;top:681px;width:1px;height:21px;background:#000;"></div>
<div style="position:absolute;left:818px;top:701px;width:137px;height:1px;background:#000;"></div>
<div class="t" style="top:684px;color:#000;transform:scaleX(1.0383);left:386.0px;width:1000px;text-align:center;transform-origin:50% 0;">XTerm</div>
<div style="position:absolute;left:955px;top:681px;width:136px;height:20px;background:#fff;"></div>
<div style="position:absolute;left:956px;top:682px;width:135px;height:19px;background:#c8c6c1;"></div>
<div style="position:absolute;left:1091px;top:681px;width:1px;height:21px;background:#000;"></div>
<div style="position:absolute;left:955px;top:701px;width:137px;height:1px;background:#000;"></div>
<div class="t" style="top:684px;color:#000;transform:scaleX(0.9877);left:523.0px;width:1000px;text-align:center;transform-origin:50% 0;">Ende</div>
<div style="position:absolute;left:1092px;top:639px;width:11px;height:62px;background:#fff;"></div>
<div style="position:absolute;left:1093px;top:640px;width:10px;height:10px;background:#c8c6c1;"></div>
<div style="position:absolute;left:1093px;top:650px;width:10px;height:1px;background:#000;"></div>
<div style="position:absolute;left:1093px;top:651px;width:10px;height:50px;background:#b2b0aa;"></div>
<div style="position:absolute;left:2px;top:701px;width:1101px;height:1px;background:#000;"></div>
<div style="position:absolute;left:2px;top:702px;width:1101px;height:19px;background:#fff;"></div>
<div style="position:absolute;left:3px;top:703px;width:1100px;height:18px;background:#c8c6c1;"></div>
<div class="t" style="top:705px;color:#000;transform:scaleX(0.9439);left:52px;width:1000px;text-align:center;transform-origin:50% 0;">Sat Jan 10 16:17:57 2015  --  Freier Speicher: 1508132 KB  -  Freier Swap: 0 KB</div>
<div style="position:absolute;left:0px;top:0px;width:1104px;height:1px;background:#f00;"></div>
<div style="position:absolute;left:0px;top:721px;width:1104px;height:1px;background:#f00;"></div>
<div style="position:absolute;left:0px;top:0px;width:1px;height:722px;background:#f00;"></div>
<div style="position:absolute;left:1103px;top:0px;width:1px;height:722px;background:#f00;"></div>
</div></body></html>
